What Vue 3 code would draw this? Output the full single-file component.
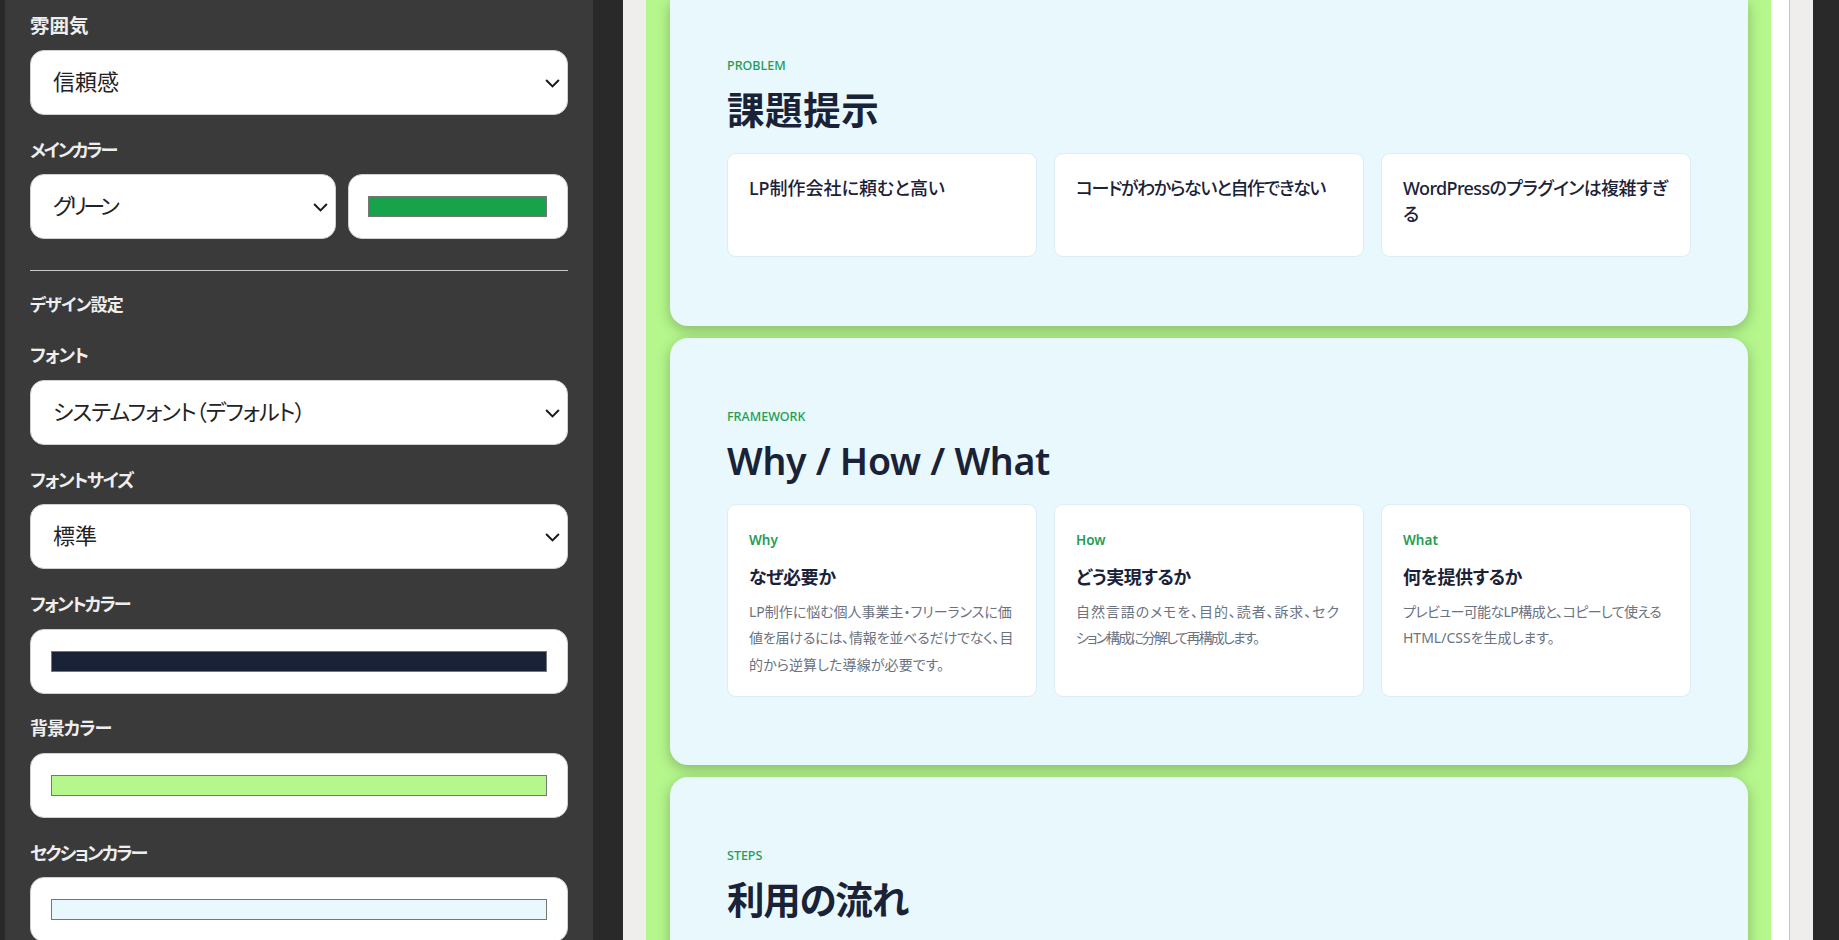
<script setup>
const problems = [
  { t: 'LP制作会社に頼むと高い', ls: 0 },
  { t: 'コードがわからないと自作できない', ls: -1.4 },
  { t: 'WordPressのプラグインは複雑すぎ\nる', ls: -0.6 }
]
const frames = [
  { tag: 'Why', title: 'なぜ必要か', lines: [
    { t: 'LP制作に悩む個人事業主・フリーランスに価', ls: 0 },
    { t: '値を届けるには、情報を並べるだけでなく、目', ls: -0.2 },
    { t: '的から逆算した導線が必要です。', ls: 0.1 }
  ] },
  { tag: 'How', title: 'どう実現するか', lines: [
    { t: '自然言語のメモを、目的、読者、訴求、セク', ls: 0.9 },
    { t: 'ション構成に分解して再構成します。', ls: -1.9 }
  ] },
  { tag: 'What', title: '何を提供するか', lines: [
    { t: 'プレビュー可能なLP構成と、コピーして使える', ls: -0.6 },
    { t: 'HTML/CSSを生成します。', ls: 0 }
  ] }
]
</script>

<template>
  <div class="app">
    <aside class="sidebar">
      <div class="field">
        <label class="label big">雰囲気</label>
        <div class="select-wrap">
          <select class="select"><option>信頼感</option></select>
          <svg class="chev" viewBox="0 0 14 8"><path d="M1 1l6 6 6-6" /></svg>
        </div>
      </div>
      <div class="field">
        <label class="label t4">メインカラー</label>
        <div class="row">
          <div class="select-wrap">
            <select class="select tight"><option>グリーン</option></select>
            <svg class="chev" viewBox="0 0 14 8"><path d="M1 1l6 6 6-6" /></svg>
          </div>
          <input class="color" type="color" value="#16a34a" />
        </div>
      </div>
      <hr class="divider" />
      <div class="heading">デザイン設定</div>
      <div class="field">
        <label class="label t1">フォント</label>
        <div class="select-wrap">
          <select class="select semi"><option>システムフォント（デフォルト）</option></select>
          <svg class="chev" viewBox="0 0 14 8"><path d="M1 1l6 6 6-6" /></svg>
        </div>
      </div>
      <div class="field">
        <label class="label t2">フォントサイズ</label>
        <div class="select-wrap">
          <select class="select"><option>標準</option></select>
          <svg class="chev" viewBox="0 0 14 8"><path d="M1 1l6 6 6-6" /></svg>
        </div>
      </div>
      <div class="field">
        <label class="label t3">フォントカラー</label>
        <input class="color" type="color" value="#1a2238" />
      </div>
      <div class="field">
        <label class="label t1">背景カラー</label>
        <input class="color" type="color" value="#b5f78c" />
      </div>
      <div class="field">
        <label class="label t3">セクションカラー</label>
        <input class="color" type="color" value="#e8f8fc" />
      </div>
    </aside>

    <main class="stage">
      <div class="frame">
        <div class="page">
          <section class="section section-first">
            <div class="eyebrow">PROBLEM</div>
            <h2 class="h2 h2-wide">課題提示</h2>
            <div class="cards">
              <div
                v-for="p in problems"
                :key="p.t"
                class="card card-problem"
                :style="{ letterSpacing: p.ls + 'px' }"
              >{{ p.t }}</div>
            </div>
          </section>
          <section class="section">
            <div class="eyebrow">FRAMEWORK</div>
            <h2 class="h2 h2-latin">Why / How / What</h2>
            <div class="cards">
              <div v-for="f in frames" :key="f.tag" class="card card-frame">
                <div class="tag">{{ f.tag }}</div>
                <h3 class="h3">{{ f.title }}</h3>
                <p class="body">
                  <span
                    v-for="l in f.lines"
                    :key="l.t"
                    class="line"
                    :style="{ letterSpacing: l.ls + 'px' }"
                  >{{ l.t }}</span>
                </p>
              </div>
            </div>
          </section>
          <section class="section">
            <div class="eyebrow">STEPS</div>
            <h2 class="h2 h2-tight">利用の流れ</h2>
          </section>
        </div>
        <div class="scrollbar"></div>
      </div>
    </main>
  </div>
</template>

<style>
html, body { margin: 0; height: 100%; overflow: hidden; background: #292929; }
</style>

<style scoped>
.app {
  display: flex;
  width: 1839px;
  height: 940px;
  overflow: hidden;
  background: #292929;
  font-family: "Noto Sans", "Noto Sans CJK JP", sans-serif;
  font-feature-settings: "palt";
}
.sidebar {
  box-sizing: border-box;
  flex: none;
  width: 588px;
  margin-left: 5px;
  height: 940px;
  padding: 13.5px 25px 0;
  background: #3a3a3a;
  overflow: hidden;
}
.field { margin-bottom: 22.83px; }
.label {
  display: block;
  height: 24px;
  line-height: 24px;
  margin-bottom: 12.5px;
  font-size: 18px;
  font-weight: 700;
  color: #eeeeee;
  white-space: nowrap;
}
.big { font-size: 19.5px; }
.t1 { letter-spacing: -1.1px; }
.t2 { letter-spacing: -1.35px; }
.t3 { letter-spacing: -1.9px; }
.t4 { letter-spacing: -2.2px; }
.heading {
  height: 24px;
  line-height: 24px;
  margin-bottom: 26px;
  font-size: 17px;
  font-weight: 700;
  color: #eeeeee;
  letter-spacing: -0.8px;
}
.divider {
  border: 0;
  height: 1px;
  background: #c8c8c8;
  margin: 30.67px 0 22.5px;
}
.row { display: flex; gap: 12px; }
.row .select-wrap { flex: none; width: 306px; }
.row .color { flex: none; width: 220px; padding-left: 19px; }
.select-wrap { position: relative; }
.select {
  display: block;
  width: 100%;
  height: 65px;
  box-sizing: border-box;
  padding: 0 40px 3px 22px;
  appearance: none;
  border: 1px solid #d0d0d0;
  border-radius: 14px;
  background: #ffffff;
  color: #222222;
  font-family: inherit;
  font-feature-settings: inherit;
  font-size: 22px;
}
.tight { letter-spacing: -3.8px; }
.semi { letter-spacing: -1px; }
.chev {
  position: absolute;
  right: 8px;
  top: 29px;
  width: 15px;
  height: 8.5px;
  fill: none;
  stroke: #1a1a1a;
  stroke-width: 1.9;
  overflow: visible;
}
.color {
  display: block;
  width: 100%;
  height: 65px;
  box-sizing: border-box;
  padding: 21px 20px;
  appearance: none;
  border: 1px solid #d0d0d0;
  border-radius: 14px;
  background: #ffffff;
}
.color::-webkit-color-swatch-wrapper { padding: 0; }
.color::-webkit-color-swatch { border: 1px solid #767676; border-radius: 0; }

.stage {
  flex: none;
  box-sizing: border-box;
  margin-left: 30px;
  width: 1190px;
  height: 940px;
  padding-left: 23px;
  padding-right: 23px;
  background: #efeeed;
  overflow: hidden;
}
.frame {
  display: flex;
  height: 940px;
  border-right: 1px solid #c4c4c4;
  overflow: hidden;
}
.page {
  flex: 1;
  min-width: 0;
  box-sizing: border-box;
  height: 940px;
  padding: 0 23px 0 24px;
  background: #b5f78c;
  overflow: hidden;
}
.scrollbar { flex: none; width: 18px; background: #ffffff; }
.section {
  box-sizing: border-box;
  margin-bottom: 12px;
  padding: 70px 57px 68.4px;
  background: #e8f8fc;
  border-radius: 18px;
  box-shadow: 0 4px 14px rgba(0, 0, 0, 0.26);
}
.section-first {
  padding-top: 57px;
  border-radius: 0 0 18px 18px;
  height: 326px;
}
.eyebrow {
  font-size: 12.5px;
  line-height: 18px;
  font-weight: 500;
  color: #1f9d55;
}
.h2 {
  margin: 9px 0 17px;
  font-size: 37.5px;
  line-height: 52px;
  font-weight: 600;
  color: #1a2238;
}
.h2-wide { letter-spacing: 0.6px; }
.h2-latin { letter-spacing: -0.3px; }
.h2-tight { letter-spacing: -1.2px; }
.cards {
  display: grid;
  grid-template-columns: repeat(3, 1fr);
  gap: 17px;
}
.card {
  box-sizing: border-box;
  background: #ffffff;
  border: 1px solid #dbeef3;
  border-radius: 9px;
  padding: 21px 21px 19px;
}
.card-problem {
  min-height: 104px;
  font-size: 18px;
  line-height: 26px;
  font-weight: 500;
  color: #1a2238;
  white-space: pre-line;
}
.card-frame { padding: 23px 21px 18px; }
.tag {
  font-size: 13.5px;
  line-height: 24px;
  font-weight: 600;
  color: #1f9d55;
}
.h3 {
  margin: 11.5px 0 9px;
  font-size: 18px;
  line-height: 26px;
  font-weight: 700;
  color: #1a2238;
  letter-spacing: -0.4px;
}
.body {
  margin: 0;
  font-size: 14px;
  line-height: 26.5px;
  color: #6b7280;
}
.line { display: block; white-space: nowrap; }
</style>
